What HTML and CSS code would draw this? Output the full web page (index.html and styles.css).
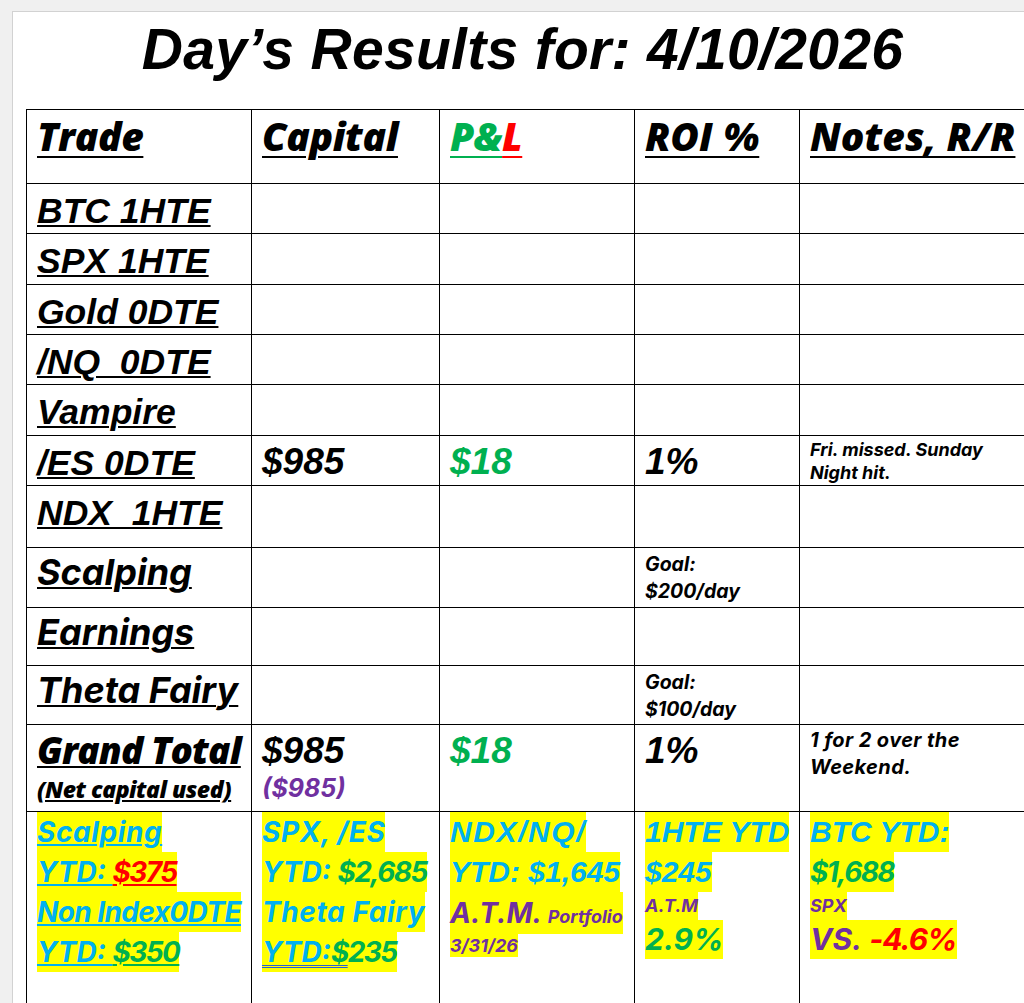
FILE: index.html
```html
<!DOCTYPE html>
<html>
<head>
<meta charset="utf-8">
<link rel="stylesheet" href="styles.css">
</head>
<body>
<div class="page">
  <h1 class="title">Day’s Results for: 4/10/2026</h1>
  <table class="grid">
    <colgroup>
      <col class="c1"><col class="c2"><col class="c3"><col class="c4"><col class="c5">
    </colgroup>
    <tr class="r-head">
      <th><span class="hd u">Trade</span></th>
      <th><span class="hd u">Capital</span></th>
      <th><span class="hd"><span class="pl-p">P&amp;</span><span class="pl-l">L</span></span></th>
      <th><span class="hd2 u">ROI %</span></th>
      <th><span class="hd2 u">Notes, R/R</span></th>
    </tr>
    <tr class="r50"><td><span class="lbl u">BTC 1HTE</span></td><td></td><td></td><td></td><td></td></tr>
    <tr class="r51"><td><span class="lbl u">SPX 1HTE</span></td><td></td><td></td><td></td><td></td></tr>
    <tr class="r50"><td><span class="lbl u">Gold 0DTE</span></td><td></td><td></td><td></td><td></td></tr>
    <tr class="r50"><td><span class="lbl u">/NQ&nbsp; 0DTE</span></td><td></td><td></td><td></td><td></td></tr>
    <tr class="r51"><td><span class="lbl u">Vampire</span></td><td></td><td></td><td></td><td></td></tr>
    <tr class="r50">
      <td><span class="lbl u">/ES 0DTE</span></td>
      <td><span class="val">$985</span></td>
      <td><span class="val green">$18</span></td>
      <td><span class="val">1%</span></td>
      <td><div class="note">Fri. missed. Sunday Night hit.</div></td>
    </tr>
    <tr class="r62"><td><span class="lbl u">NDX&nbsp; 1HTE</span></td><td></td><td></td><td></td><td></td></tr>
    <tr class="r60"><td><span class="lbl2 u">Scalping</span></td><td></td><td></td><td><div class="goal">Goal:<br>$200/day</div></td><td></td></tr>
    <tr class="r58"><td><span class="lbl2 u">Earnings</span></td><td></td><td></td><td></td><td></td></tr>
    <tr class="r59"><td><span class="lbl2 u">Theta Fairy</span></td><td></td><td></td><td><div class="goal">Goal:<br>$100/day</div></td><td></td></tr>
    <tr class="r87">
      <td><div class="gt"><span class="u">Grand Total</span></div><div class="gt-sub"><span class="u">(Net capital used)</span></div></td>
      <td><div class="val2">$985</div><div class="purple neg">($985)</div></td>
      <td><div class="val2 green">$18</div></td>
      <td><div class="val2">1%</div></td>
      <td><div class="note note2">1 for 2 over the Weekend.</div></td>
    </tr>
    <tr class="r-bottom">
      <td>
        <div class="ln"><span class="hl a"><span class="cyan uc wide">Scalping</span></span></div>
        <div class="ln"><span class="hl a"><span class="cyan uc">YTD:&nbsp;</span><span class="red ur num">$375</span></span></div>
        <div class="ln"><span class="hl a"><span class="cyan uc tight">Non Index0DTE</span></span></div>
        <div class="ln"><span class="hl a"><span class="cyan uc">YTD:&nbsp;</span><span class="green ug num">$350</span></span></div>
      </td>
      <td>
        <div class="ln"><span class="hl a"><span class="cyan wide">SPX, /ES</span></span></div>
        <div class="ln"><span class="hl a"><span class="cyan">YTD:&nbsp;</span><span class="green num">$2,685</span></span></div>
        <div class="ln"><span class="hl a"><span class="cyan wide">Theta Fairy</span></span></div>
        <div class="ln"><span class="hl a"><span class="cyan dbl">YTD:</span><span class="green num"><span class="dbl">$</span>235</span></span></div>
      </td>
      <td>
        <div class="ln"><span class="hl b"><span class="cyan spread">NDX/NQ/</span></span></div>
        <div class="ln"><span class="hl b"><span class="cyan">YTD: $1,645</span></span></div>
        <div class="ln h42"><span class="hl a atm"><span class="purple">A.T.M. <span class="small">Portfolio</span></span></span></div>
        <div class="ln h23"><span class="hl a tiny"><span class="purple">3/31/26</span></span></div>
      </td>
      <td>
        <div class="ln"><span class="hl b"><span class="cyan">1HTE YTD</span></span></div>
        <div class="ln"><span class="hl b"><span class="cyan">$245</span></span></div>
        <div class="ln h28"><span class="hl a tiny"><span class="purple">A.T.M</span></span></div>
        <div class="ln h39"><span class="hl a big"><span class="green">2.9%</span></span></div>
      </td>
      <td>
        <div class="ln"><span class="hl b"><span class="cyan">BTC YTD:</span></span></div>
        <div class="ln"><span class="hl a"><span class="green num">$1,688</span></span></div>
        <div class="ln h28"><span class="hl a tiny"><span class="purple">SPX</span></span></div>
        <div class="ln h39"><span class="hl a big"><span class="purple">VS.&nbsp;</span><span class="red num2">-4.6%</span></span></div>
      </td>
    </tr>
  </table>
</div>
</body>
</html>
```

FILE: styles.css
```css
html, body {
  margin: 0;
  padding: 0;
  background: #f0f0f0;
  overflow: hidden;
  width: 1024px;
  height: 1003px;
}

.page {
  margin: 11px 0 0 12px;
  width: 1040px;
  height: 1100px;
  background: #ffffff;
  border-left: 1px solid #d2d2d2;
  border-top: 1px solid #d2d2d2;
  box-sizing: border-box;
  padding: 0 0 0 13px;
}

.title {
  margin: 0;
  padding: 5px 0 0 0;
  height: 97px;
  box-sizing: border-box;
  width: 993px;
  text-align: center;
  font-family: "Liberation Sans", Arial, sans-serif;
  font-weight: 700;
  font-style: italic;
  font-size: 57px;
  line-height: 64px;
  letter-spacing: 0.3px;
  color: #000;
}

.grid {
  border-collapse: collapse;
  table-layout: fixed;
  width: 1020px;
}

.c1 { width: 225px; }
.c2 { width: 188px; }
.c3 { width: 195px; }
.c4 { width: 165px; }
.c5 { width: 247px; }

.grid th, .grid td {
  border: 1px solid #000;
  vertical-align: top;
  text-align: left;
  padding: 0 0 0 10px;
  overflow: hidden;
}

.u { text-decoration: underline; text-decoration-thickness: 2px; text-underline-offset: 2px; }

.r-head { height: 74px; }
.r50 { height: 50px; }
.r51 { height: 51px; }
.r58 { height: 58px; }
.r59 { height: 59px; }
.r60 { height: 60px; }
.r62 { height: 62px; }
.r87 { height: 87px; }
.r-bottom { height: 200px; }

.hd, .hd2 {
  display: inline-block;
  padding-top: 4px;
  font-family: "Open Sans", "Noto Sans", sans-serif;
  font-weight: 800;
  font-style: italic;
  font-size: 39px;
  line-height: 44px;
  letter-spacing: -0.4px;
  color: #000;
  text-underline-offset: 5px;
}

.hd2 { letter-spacing: 0; }

.pl-p { color: #00b050; text-decoration: underline #00b050; text-decoration-thickness: 2px; text-underline-offset: 5px; }
.pl-l { color: #ff0000; text-decoration: underline #ff0000; text-decoration-thickness: 2px; text-underline-offset: 5px; }

.lbl {
  display: inline-block;
  margin-top: 7px;
  font-family: "Liberation Sans", Arial, sans-serif;
  font-weight: 700;
  font-style: italic;
  font-size: 35.5px;
  line-height: 40px;
  color: #000;
}

.lbl2 {
  display: inline-block;
  margin-top: 4px;
  font-family: Inter, "Liberation Sans", sans-serif;
  font-weight: 700;
  font-style: italic;
  font-size: 36px;
  line-height: 40px;
  color: #000;
}

.val, .val2 {
  display: inline-block;
  margin-top: 6px;
  font-family: "Liberation Sans", Arial, sans-serif;
  font-weight: 700;
  font-style: italic;
  font-size: 37px;
  line-height: 40px;
  color: #000;
}

.val2 { display: block; }

.green { color: #00b050; }
.red { color: #ff0000; }
.cyan { color: #00b0f0; }
.purple { color: #7030a0; }

.val.green, .val2.green { color: #00b050; }

.note {
  margin-top: 2px;
  font-family: Inter, "Liberation Sans", sans-serif;
  font-weight: 700;
  font-style: italic;
  font-size: 18px;
  line-height: 23px;
  color: #000;
  width: 200px;
}

.note2 {
  margin-top: 2px;
  font-size: 20px;
  line-height: 27px;
  width: 215px;
  letter-spacing: 0.4px;
}

.goal {
  margin-top: 3px;
  font-family: Inter, "Liberation Sans", sans-serif;
  font-weight: 700;
  font-style: italic;
  font-size: 19.5px;
  line-height: 27px;
  color: #000;
}

.gt {
  margin-top: 6px;
  height: 38px;
  font-family: "Open Sans", "Noto Sans", sans-serif;
  font-weight: 800;
  font-style: italic;
  font-size: 37px;
  line-height: 38px;
  letter-spacing: -0.9px;
  color: #000;
}

.gt-sub {
  margin-top: 6px;
  height: 28px;
  font-family: "Open Sans", "Noto Sans", sans-serif;
  font-weight: 800;
  font-style: italic;
  font-size: 23px;
  line-height: 28px;
  letter-spacing: -0.5px;
  color: #000;
}

.neg {
  font-family: Inter, "Liberation Sans", sans-serif;
  font-weight: 700;
  font-style: italic;
  font-size: 25px;
  line-height: 34px;
}

.ln {
  height: 40px;
  white-space: nowrap;
}

.ln.h42 { height: 42px; }
.ln.h23 { height: 23px; }
.ln.h28 { height: 28px; }
.ln.h39 { height: 39px; }

.hl {
  display: inline-block;
  vertical-align: top;
  background: #ffff00;
  font-weight: 700;
  font-style: italic;
  line-height: 40px;
  height: 40px;
}

.h42 .hl { line-height: 42px; height: 42px; }
.h23 .hl { line-height: 23px; height: 23px; }
.h28 .hl { line-height: 28px; height: 28px; }
.h39 .hl { line-height: 39px; height: 39px; }

.a {
  font-family: Inter, "Liberation Sans", sans-serif;
  font-size: 28px;
}

.b {
  font-family: "Liberation Sans", Arial, sans-serif;
  font-size: 30px;
}

.num { letter-spacing: -1.6px; }
.num2 { letter-spacing: -1px; }
.wide { letter-spacing: 0.6px; }
.tight { letter-spacing: -0.6px; }
.spread { letter-spacing: 1.6px; }

.atm { font-size: 28px; }
.atm .small { font-size: 18px; }
.tiny { font-size: 18px; }
.big { font-size: 30px; }

.uc { text-decoration: underline #00b0f0; text-decoration-thickness: 2px; text-underline-offset: 2px; }
.ur { text-decoration: underline #ff0000; text-decoration-thickness: 2px; text-underline-offset: 2px; }
.ug { text-decoration: underline #00b050; text-decoration-thickness: 2px; text-underline-offset: 2px; }

.dbl {
  text-decoration: underline double #2a5fd8;
  text-decoration-thickness: 1px;
  text-underline-offset: 3px;
}
```
